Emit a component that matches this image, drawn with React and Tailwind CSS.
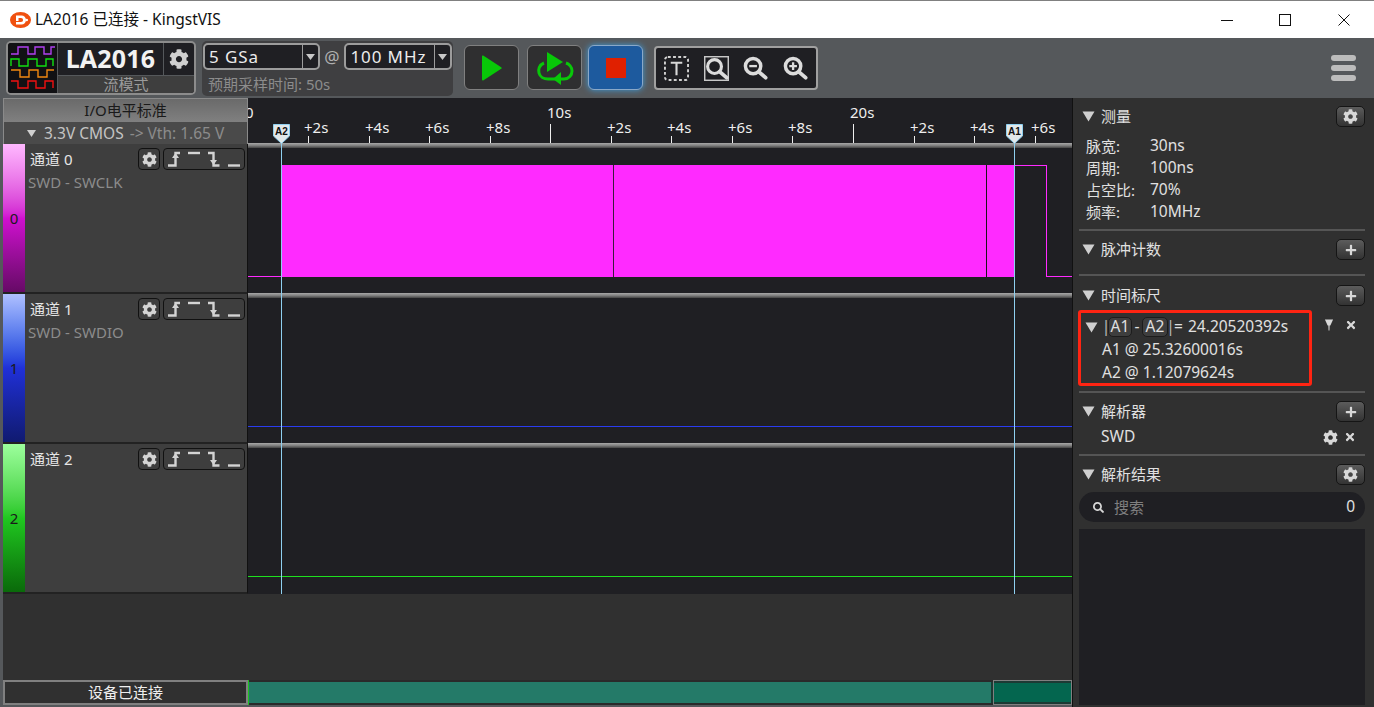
import { FaCog, FaSearch, FaPlus, FaTimes } from "react-icons/fa";

const TICKS = [
  { x: 308, label: "+2s" }, { x: 369, label: "+4s" }, { x: 429, label: "+6s" }, { x: 490, label: "+8s" },
  { x: 550, label: "10s", major: true },
  { x: 611, label: "+2s" }, { x: 671, label: "+4s" }, { x: 732, label: "+6s" }, { x: 792, label: "+8s" },
  { x: 853, label: "20s", major: true },
  { x: 914, label: "+2s" }, { x: 974, label: "+4s" }, { x: 1035, label: "+6s" },
];

const CHANNELS = [
  { id: 0, name: "通道 0", proto: "SWD - SWCLK", strip: "bg-gradient-to-b from-[#ffb8ff] via-[#d010d0] to-[#660a66]" },
  { id: 1, name: "通道 1", proto: "SWD - SWDIO", strip: "bg-gradient-to-b from-[#b0c0ff] via-[#2030d8] to-[#101a70]" },
  { id: 2, name: "通道 2", proto: "", strip: "bg-gradient-to-b from-[#9cff9c] via-[#20c820] to-[#0a6a0a]" },
];

const MEASURES = [
  ["脉宽:", "30ns"],
  ["周期:", "100ns"],
  ["占空比:", "70%"],
  ["频率:", "10MHz"],
];

function Triangle({ className = "" }) {
  return (
    <svg width="13" height="11" viewBox="0 0 13 11" className={className}>
      <path d="M0.5 0.5h12L6.5 10.5z" fill="#cfcfcf" />
    </svg>
  );
}

function Logo() {
  return (
    <svg width="21" height="16" viewBox="0 0 21 16">
      <ellipse cx="10.5" cy="8" rx="10.5" ry="8" fill="#f0500f" />
      <path d="M6 3.5h5.5a4.5 4.5 0 0 1 0 9H6v-2.4h5a2.1 2.1 0 0 0 0-4.2H8.5v3H6z" fill="#fff" />
      <circle cx="16.8" cy="8" r="1.2" fill="#fff" />
    </svg>
  );
}

function WindowControls() {
  return (
    <div className="flex items-center ml-auto">
      <svg width="12" height="12" viewBox="0 0 12 12" className="mr-[46px]"><path d="M0 6.5h12" stroke="#111" /></svg>
      <svg width="12" height="12" viewBox="0 0 12 12" className="mr-[47px]"><rect x=".5" y=".5" width="11" height="11" fill="none" stroke="#111" /></svg>
      <svg width="12" height="12" viewBox="0 0 12 12" className="mr-[24px]"><path d="M.5.5l11 11M11.5.5l-11 11" stroke="#111" /></svg>
    </div>
  );
}

function DeviceGlyph() {
  return (
    <svg width="49" height="50" viewBox="0 0 49 50" className="block">
      <path d="M3 11h7V4h10v7h7V4h9v7h7V4h4" fill="none" stroke="#b040f0" strokeWidth="1.4" />
      <path d="M3 23V16h8v7h9v-7h9v7h9v-7h7v7" fill="none" stroke="#10e010" strokeWidth="1.4" />
      <path d="M3 28h9v7h9v-7h9v7h9v-7h7" fill="none" stroke="#f08810" strokeWidth="1.4" transform="translate(0 -1)" />
      <path d="M3 40h7v7h10v-7h8v7h9v-7h8v7" fill="none" stroke="#f01010" strokeWidth="1.4" transform="translate(0 -2)" />
    </svg>
  );
}

function LoopPlay() {
  return (
    <svg width="38" height="36" viewBox="0 0 38 36">
      <path d="M11 2l16 10-16 10z" fill="#08c808" />
      <path d="M8 13C3 15 2 20 3 23c1 4 5 6 9 6h16c5 0 8-4 8-8 0-4-3-7-6-8" fill="none" stroke="#08c808" strokeWidth="3" />
      <path d="M25 22l-8 7 8 6z" fill="#08c808" />
    </svg>
  );
}

function ToolIcon({ kind }) {
  if (kind === "text") {
    return (
      <svg width="25" height="25" viewBox="0 0 26 26">
        <rect x="1" y="1" width="24" height="24" rx="3" fill="none" stroke="#d0d0d0" strokeWidth="2" strokeDasharray="3 2.4" />
        <path d="M7 7h12M13 7v13" stroke="#d8d8d8" strokeWidth="2.2" fill="none" />
      </svg>
    );
  }
  const inner = kind === "minus" ? "M6.5 10.5h8" : kind === "plus" ? "M6.5 10.5h8M10.5 6.5v8" : "";
  return (
    <svg width="25" height="25" viewBox="0 0 26 26">
      {kind === "box" && <rect x=".75" y=".75" width="24.5" height="24.5" fill="none" stroke="#c8c8c8" strokeWidth="1.5" />}
      <circle cx="10.5" cy="10.5" r="8" fill="none" stroke="#dcdcdc" strokeWidth="3.6" transform={kind === "box" ? "translate(1.5 1.5) scale(.9)" : undefined} />
      <path d="M16.5 16.5l7 6" stroke="#dcdcdc" strokeWidth="4" strokeLinecap="round" />
      {inner && <path d={inner} stroke="#dcdcdc" strokeWidth="2.4" />}
    </svg>
  );
}

function Toolbar() {
  return (
    <div className="h-[60px] flex items-start pl-[6px] pr-[18px] bg-[#55585b] shrink-0">
      <div className="mt-[3px] w-[190px] h-[54px] flex border-2 border-[#8c8c8c] rounded-[5px] bg-[#1f1f23] overflow-hidden">
        <div className="w-[50px] border-r border-[#55585b] bg-[#111114] shrink-0"><DeviceGlyph /></div>
        <div className="flex-1 flex flex-col">
          <div className="h-[32px] flex">
            <div className="flex-1 flex items-center justify-center text-[25px] font-bold text-[#f2f2f2] tracking-[0.2px]">LA2016</div>
            <div className="w-[31px] flex items-center justify-center border-l border-[#55585b] text-[#cfcfcf]"><FaCog size={20} /></div>
          </div>
          <div className="flex-1 flex items-center justify-center bg-[#3e3e3e] border-t border-[#55585b] text-[15px] text-[#9a9a9a] leading-none">流模式</div>
        </div>
      </div>

      <div className="mt-[3px] ml-[6px] w-[251px] h-[55px] bg-[#3f3f41] rounded-[5px] px-px pt-[2px]">
        <div className="flex items-center">
          <div className="w-[117px] h-[27px] flex border-2 border-[#9c9c9c] rounded-[5px] bg-[#1f1f23]">
            <div className="flex-1 pl-[4px] flex items-center text-[17px] text-[#ececec] tracking-[0.9px]">5 GSa</div>
            <div className="w-[16px] border-l border-[#9c9c9c] flex items-center justify-center text-[#c8c8c8]">
              <svg width="9" height="6" viewBox="0 0 9 6"><path d="M0 0h9L4.5 6z" fill="currentColor" /></svg>
            </div>
          </div>
          <span className="w-[25px] text-center text-[17px] text-[#b0b0b0]">@</span>
          <div className="w-[108px] h-[27px] flex border-2 border-[#9c9c9c] rounded-[5px] bg-[#1f1f23]">
            <div className="flex-1 pl-[4px] flex items-center text-[17px] text-[#ececec] tracking-[0.9px] whitespace-nowrap">100 MHz</div>
            <div className="w-[16px] border-l border-[#9c9c9c] flex items-center justify-center text-[#c8c8c8]">
              <svg width="9" height="6" viewBox="0 0 9 6"><path d="M0 0h9L4.5 6z" fill="currentColor" /></svg>
            </div>
          </div>
        </div>
        <div className="mt-[4px] pl-[5px] text-[15px] leading-[20px] text-[#8c8c8c]">预期采样时间: 50s</div>
      </div>

      <button className="mt-[7px] ml-[11px] w-[55px] h-[45px] flex items-center justify-center rounded-[6px] border border-[#808080] bg-[#2f2f30]">
        <svg width="20" height="26" viewBox="0 0 20 26"><path d="M0 1.5a1 1 0 0 1 1.6-.8l17.6 11.5a1 1 0 0 1 0 1.6L1.6 25.3a1 1 0 0 1-1.6-.8z" fill="#08c808" /></svg>
      </button>
      <button className="mt-[7px] ml-[8px] w-[55px] h-[45px] flex items-center justify-center rounded-[6px] border border-[#808080] bg-[#2f2f30]">
        <LoopPlay />
      </button>
      <button className="mt-[7px] ml-[6px] w-[55px] h-[45px] flex items-center justify-center rounded-[6px] border border-[#8aa8c8] bg-[#1d5a9e] shadow-[0_0_6px_#3d9ad8]">
        <span className="w-[20px] h-[20px] bg-[#e02000]" />
      </button>

      <div className="mt-[8px] ml-[11px] w-[164px] h-[44px] flex items-center justify-between px-[8px] rounded-[4px] border-2 border-[#a0a0a0] bg-[#1f1f23]">
        <ToolIcon kind="text" />
        <ToolIcon kind="box" />
        <ToolIcon kind="minus" />
        <ToolIcon kind="plus" />
      </div>

      <div className="ml-auto mt-[17px] w-[25px] flex flex-col gap-[4px]">
        <span className="h-[6px] rounded-full bg-[#bcbcbc]" />
        <span className="h-[6px] rounded-full bg-[#bcbcbc]" />
        <span className="h-[6px] rounded-full bg-[#bcbcbc]" />
      </div>
    </div>
  );
}

function EdgeIcons() {
  return (
    <svg width="72" height="18" viewBox="0 0 72 18">
      <g stroke="#d4d4d4" strokeWidth="2.4" fill="none">
        <path d="M0 15.5h7.5V3h4.5" />
        <path d="M20 3h12" />
        <path d="M40 3h5.5v12.5h6" />
        <path d="M60 15.5h12" />
      </g>
      <path d="M4 8l3.5-5 3.5 5z" fill="#d4d4d4" />
      <path d="M42 10l3.5 5 3.5-5z" fill="#d4d4d4" />
    </svg>
  );
}

function ChannelHead({ ch }) {
  return (
    <div className="h-[150px] flex border-b-2 border-[#222] border-r border-r-[#111]">
      <div className={`w-[22px] shrink-0 flex items-center justify-center text-[15px] text-[#1a1a1a] ${ch.strip}`}>{ch.id}</div>
      <div className="flex-1 bg-[#3e3e3e] relative pl-[3px]">
        <div className="flex items-start pt-[4px] pr-[2px]">
          <span className="ml-[2px] mt-px text-[15px] leading-[20px] text-[#e6e6e6]">{ch.name}</span>
          <button className="ml-auto w-[22px] h-[22px] flex items-center justify-center rounded-[4px] border border-[#111] text-[#d4d4d4]"><FaCog size={15} /></button>
          <button className="ml-[3px] w-[82px] h-[22px] flex items-center justify-center rounded-[4px] border border-[#111]"><EdgeIcons /></button>
        </div>
        <div className="mt-[2px] text-[15px] leading-[20px] text-[#8c8c8c]">{ch.proto}</div>
      </div>
    </div>
  );
}

function Divider() {
  return <div className="h-[5px] bg-gradient-to-b from-[#a8a8a8] via-[#808080] to-[#444]" />;
}

function Ruler() {
  return (
    <div className="h-[45px] relative overflow-hidden">
      <span className="absolute left-[-3px] top-[4px] text-[15px] leading-[20px] text-[#eee]">0</span>
      {TICKS.map((t) => (
        <div key={t.x} style={{ left: t.x - 248 }} className="absolute top-0 bottom-0">
          <span className={`absolute whitespace-nowrap text-[15px] leading-[20px] text-[#eee] ${t.major ? "left-[-3px] top-[4px]" : "left-[-4px] top-[19px]"}`}>{t.label}</span>
          <span className={`absolute left-0 bottom-0 w-px bg-[#eee] ${t.major ? "h-[19px]" : "h-[7px]"}`} />
        </div>
      ))}
    </div>
  );
}

function Wave({ id }) {
  return (
    <svg width="824" height="145" viewBox="0 0 824 145" className="block" shapeRendering="crispEdges">
      {id === 0 && (
        <>
          <rect x="0" y="128" width="34" height="1" fill="#ff2aff" />
          <rect x="34" y="17" width="732" height="112" fill="#ff2aff" />
          <rect x="365" y="17" width="1" height="112" fill="#3a1a3a" />
          <rect x="738" y="17" width="1" height="112" fill="#1c141c" />
          <rect x="766" y="17" width="32" height="1" fill="#ff2aff" />
          <rect x="798" y="17" width="1" height="112" fill="#ff2aff" />
          <rect x="798" y="128" width="26" height="1" fill="#ff2aff" />
        </>
      )}
      {id === 1 && <rect x="0" y="128" width="824" height="1" fill="#2a3cf0" />}
      {id === 2 && <rect x="0" y="128" width="824" height="1" fill="#1ee01e" />}
    </svg>
  );
}

function CursorBadge({ label, left }) {
  return (
    <div style={{ left }} className="absolute top-[26px] w-[17px] h-[20px]">
      <svg width="17" height="20" viewBox="0 0 17 20" className="absolute inset-0">
        <path d="M.5.5h16v11.5l-8 7.5-8-7.5z" fill="#e2e8ea" stroke="#8fd0f0" />
      </svg>
      <span className="absolute inset-x-0 top-[1px] text-center text-[10px] leading-[14px] font-bold text-[#111] font-['Liberation_Sans',sans-serif]">{label}</span>
    </div>
  );
}

function WaveArea() {
  return (
    <div className="w-[824px] h-[496px] relative bg-[#1f1f23] overflow-hidden">
      <Ruler />
      {CHANNELS.map((ch) => (
        <div key={ch.id} className="h-[150px]">
          <Divider />
          <Wave id={ch.id} />
        </div>
      ))}
      <span className="absolute left-[33px] top-[45px] bottom-0 w-px bg-[#8fd0f0]" />
      <span className="absolute left-[766px] top-[45px] bottom-0 w-px bg-[#8fd0f0]" />
      <CursorBadge label="A2" left={25} />
      <CursorBadge label="A1" left={758} />
    </div>
  );
}

function LevelBox() {
  return (
    <div className="h-[46px] flex flex-col border border-[#8a8a8a] border-b-0">
      <div className="h-[23px] flex items-center justify-center bg-gradient-to-b from-[#6a6a6a] to-[#808080] text-[15px] text-[#1a1a1a]">I/O电平标准</div>
      <div className="flex-1 flex items-center pl-[23px] bg-[#4a4a4a] text-[15.5px] whitespace-nowrap">
        <svg width="9" height="7" viewBox="0 0 9 7"><path d="M0 0h9L4.5 7z" fill="#d0d0d0" /></svg>
        <span className="ml-[8px] text-[#c4c4c4]">3.3V CMOS</span>
        <span className="ml-[6px] text-[#8c8c8c]">-&gt; Vth: 1.65 V</span>
      </div>
    </div>
  );
}

function StatusBar() {
  return (
    <div className="h-[25px] flex shrink-0">
      <div className="w-[245px] flex items-center justify-center border-2 border-[#808080] bg-[#303030] text-[15px] text-[#eee]">设备已连接</div>
      <div className="flex-1 flex bg-[#2a2a2a] border-l border-[#20c020]">
        <div className="flex-1 mt-[2px] mb-[2px] bg-[#247a68] border-r-2 border-[#1c3a34]" />
        <div className="w-[79px] border border-[#808080] py-[2px] bg-[#1c3a34]"><div className="h-full bg-[#04664f]" /></div>
      </div>
    </div>
  );
}

function PanelButton({ icon }) {
  return (
    <button className="w-[29px] h-[21px] flex items-center justify-center rounded-[5px] border border-[#151515] bg-gradient-to-b from-[#5c5c5c] to-[#333] text-[#d8d8d8]">
      {icon === "gear" ? <FaCog size={15} /> : <FaPlus size={12} />}
    </button>
  );
}

function SectionHead({ title, icon, className = "" }) {
  return (
    <div className={`h-[21px] flex items-center pl-[3px] ${className}`}>
      <Triangle />
      <span className="ml-[6px] mb-[2px] text-[15px] leading-[20px] text-[#e0e0e0]">{title}</span>
      <span className="ml-auto"><PanelButton icon={icon} /></span>
    </div>
  );
}

function Sep({ className = "" }) {
  return <div className={`h-[2px] bg-[#555] ${className}`} />;
}

function Chip({ width, children }) {
  return <span className={`${width} h-[20px] flex items-center justify-center rounded-[5px] bg-[#3e3e3e] border border-[#1c1c1c]`}>{children}</span>;
}

function SidePanel() {
  return (
    <div className="flex-1 flex flex-col pl-[6px] pr-[9px] pb-[2px] bg-[#303030] border-l border-[#111] text-[15.5px] text-[#e0e0e0] whitespace-nowrap">
      <SectionHead title="测量" icon="gear" className="mt-[8px]" />
      <div className="mt-[8px] pl-[7px]">
        {MEASURES.map(([k, v]) => (
          <div key={k} className="h-[22px] flex items-center">
            <span className="w-[64px] text-[15px]">{k}</span>
            <span>{v}</span>
          </div>
        ))}
      </div>
      <Sep className="mt-[6px]" />
      <SectionHead title="脉冲计数" icon="plus" className="mt-[8px]" />
      <Sep className="mt-[14px]" />
      <SectionHead title="时间标尺" icon="plus" className="mt-[9px]" />

      <div className="mt-[4px] flex items-start">
        <div className="ml-[-1px] w-[234px] h-[76px] border-[3px] border-[#ff2412] rounded-[3px] pl-[4px] pt-[3px]">
          <div className="h-[22px] flex items-center">
            <Triangle className="mr-[6px]" />
            <span className="w-[4px] flex justify-center text-[#bbb]">|</span>
            <Chip width="w-[24px]">A1</Chip>
            <span className="w-[10px] flex justify-center">-</span>
            <Chip width="w-[26px]">A2</Chip>
            <span className="w-[5px] flex justify-center text-[#bbb]">|</span>
            <span className="w-[11px] flex justify-center">=</span>
            <span className="ml-[4px]">24.20520392s</span>
          </div>
          <div className="pl-[17px] h-[23px] flex items-center">A1 @ 25.32600016s</div>
          <div className="pl-[17px] h-[23px] flex items-center">A2 @ 1.12079624s</div>
        </div>
        <div className="ml-auto mt-[9px] mr-[8px] flex items-center gap-[11px] text-[#d8d8d8]">
          <svg width="10" height="12" viewBox="0 0 11 12"><path d="M1 0h9L7 6.5H6.2L6 12H5L4.8 6.5H4z" fill="currentColor" /></svg>
          <FaTimes size={12} />
        </div>
      </div>

      <Sep className="mt-[5px]" />
      <SectionHead title="解析器" icon="plus" className="mt-[8px]" />
      <div className="mt-[4px] h-[22px] flex items-center pl-[22px] pr-[9px]">
        <span>SWD</span>
        <span className="ml-auto flex items-center gap-[6px] text-[#d8d8d8]"><FaCog size={15} /><FaTimes size={12} /></span>
      </div>
      <Sep className="mt-[6px]" />
      <SectionHead title="解析结果" icon="gear" className="mt-[8px]" />
      <div className="mt-[7px] h-[30px] flex items-center rounded-full bg-[#1f1f23] pl-[14px] pr-[10px]">
        <FaSearch size={11} className="text-[#d8d8d8]" />
        <span className="ml-[10px] text-[15px] text-[#808080]">搜索</span>
        <span className="ml-auto text-[#e0e0e0]">0</span>
      </div>
      <div className="mt-[7px] flex-1 bg-[#1f1f23]" />
    </div>
  );
}

export default function App() {
  return (
    <div className="w-[1374px] h-[707px] flex flex-col overflow-hidden bg-[#55585b] font-['Noto_Sans','Noto_Sans_CJK_SC',sans-serif]">
      <div className="h-[38px] shrink-0 flex items-center pl-[10px] bg-white border-t border-[#808080] text-[15.5px] text-[#111]">
        <Logo />
        <span className="ml-[4px]">LA2016 已连接 - KingstVIS</span>
        <WindowControls />
      </div>
      <Toolbar />
      <div className="flex-1 flex min-h-0">
        <div className="w-[1072px] shrink-0 flex flex-col pl-[3px]">
          <div className="flex">
            <div className="w-[245px] shrink-0">
              <LevelBox />
              {CHANNELS.map((ch) => <ChannelHead key={ch.id} ch={ch} />)}
            </div>
            <WaveArea />
          </div>
          <div className="flex-1 bg-[#303030]" />
          <StatusBar />
          <div className="h-[2px] shrink-0" />
        </div>
        <SidePanel />
      </div>
    </div>
  );
}
